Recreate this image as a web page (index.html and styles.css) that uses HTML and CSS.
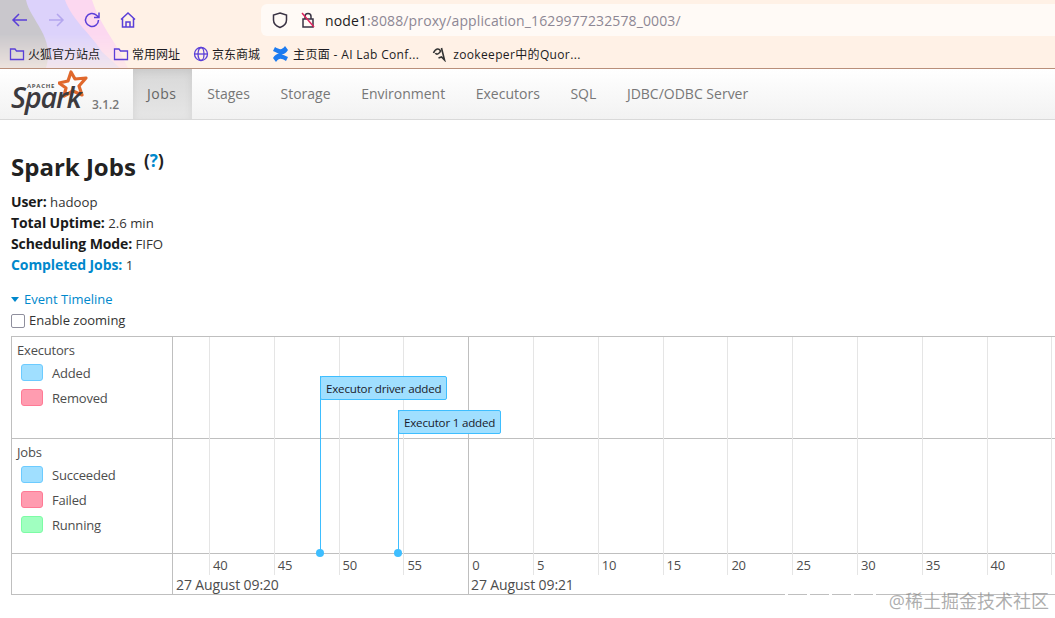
FILE: index.html
```html
<!DOCTYPE html>
<html lang="en">
<head>
    <meta charset="UTF-8">
    <title>Spark Jobs</title>
    <link rel="stylesheet" href="styles.css">
</head>
<body>
<!-- browser bar -->
<header class="chrome">
    <svg class="chrome-wash" width="300" height="68" viewBox="0 0 300 68">
        <path d="M0 0H92C100 25 115 40 128 68H0Z" fill="#fcd8f0"/>
        <path d="M0 0H65C72 20 92 35 102 52L120 68H0Z" fill="#dcd2fb"/>
        <path d="M0 0H26C30 20 56 38 46 68H0Z" fill="#c9c7cc"/>
    </svg>
    <div class="toolbar">
        <svg class="tool" width="20" height="20" viewBox="0 0 20 20"><path d="M17 10H3M9 4l-6 6 6 6"/></svg>
        <svg class="tool tool-off" width="20" height="20" viewBox="0 0 20 20"><path d="M3 10h14M11 4l6 6-6 6"/></svg>
        <svg class="tool" width="20" height="20" viewBox="0 0 20 20"><path d="M16.500 10a6.500 6.500 0 1 1-2-4.700L17 7.500M17 2.500v5h-5"/></svg>
        <svg class="tool" width="20" height="20" viewBox="0 0 20 20"><path d="M3 9.500 10 3l7 6.500M4.500 8.500V17h11V8.500M8 17v-5h4v5"/></svg>
        <div class="urlbar">
            <svg class="url-icon" width="18" height="18" viewBox="0 0 18 18"><path d="M9 2l6.500 2v5c0 3.500-2.500 6-6.500 7.500C5 15 2.500 12.500 2.500 9V4Z"/></svg>
            <svg class="url-icon" width="18" height="18" viewBox="0 0 18 18"><path d="M6 8V5.500a3 3 0 0 1 6 0V8M4 8h10v8H4Z"/><path class="strike" d="M3 2l12 14"/></svg>
            <span class="url"><b>node1</b>:8088/proxy/application_1629977232578_0003/</span>
        </div>
    </div>
    <div class="bookmarks">
        <span class="mark"><svg class="mark-icon" width="16" height="16" viewBox="0 0 16 16"><path d="M1.500 3h4.500l1.500 2h7v8.500h-13Z"/></svg>火狐官方站点</span>
        <span class="mark"><svg class="mark-icon" width="16" height="16" viewBox="0 0 16 16"><path d="M1.500 3h4.500l1.500 2h7v8.500h-13Z"/></svg>常用网址</span>
        <span class="mark"><svg class="mark-icon" width="16" height="16" viewBox="0 0 16 16"><circle cx="8" cy="8" r="6.500"/><ellipse cx="8" cy="8" rx="3" ry="6.500"/><path d="M1.500 8h13"/></svg>京东商城</span>
        <span class="mark mark-latin"><svg width="17" height="16" viewBox="0 0 17 16"><path d="M1 12c4-6 7-5 15-1l-2 4C9 12 7 12 4 16ZM16 4C12 10 9 9 1 5l2-4c5 3 7 3 10-1Z" fill="#1d7bf0"/></svg>主页面 - AI Lab Conf...</span>
        <span class="mark mark-latin"><svg width="18" height="16" viewBox="0 0 17 16"><path d="M2 7c2-5 6-5 7-2-1 3-4 4-5 2M10 2l3 12-3-3-3 1" fill="none" stroke="#333" stroke-width="1.600"/></svg>zookeeper中的Quor...</span>
    </div>
</header>

<!-- spark nav -->
<nav class="navbar">
    <div class="brand">
        <div class="logo">
            <svg class="logo-star" width="30" height="28" viewBox="0 0 30 28"><path d="M13 2l4 7 11-1-7 8 3 9-9-4-9 5 2-8-7-5 9-2Z" fill="none" stroke="#e0682c" stroke-width="3.200" stroke-linejoin="round"/></svg>
            <span class="logo-apache">APACHE</span>
            <span class="logo-spark">Spark</span>
        </div>
        <span class="version">3.1.2</span>
    </div>
    <ul class="tabs">
        <li class="tab-active">Jobs</li>
        <li>Stages</li>
        <li>Storage</li>
        <li>Environment</li>
        <li>Executors</li>
        <li>SQL</li>
        <li>JDBC/ODBC Server</li>
    </ul>
</nav>

<main>
    <h3>Spark Jobs <sup>(<a>?</a>)</sup></h3>
    <ul class="summary">
        <li><strong>User:</strong> hadoop</li>
        <li><strong>Total Uptime:</strong> 2.6 min</li>
        <li><strong>Scheduling Mode:</strong> FIFO</li>
        <li><a><strong>Completed Jobs:</strong></a> 1</li>
    </ul>
    <div class="expand"><span class="caret"></span>Event Timeline</div>
    <label class="zoom"><span class="checkbox"></span>Enable zooming</label>

    <div class="timeline">
        <div class="tl-labels">
            <div class="group group-exec">
                Executors
                <div class="legend"><span class="swatch sw-blue"></span>Added</div>
                <div class="legend"><span class="swatch sw-red"></span>Removed</div>
            </div>
            <div class="group group-jobs">
                Jobs
                <div class="legend"><span class="swatch sw-blue"></span>Succeeded</div>
                <div class="legend"><span class="swatch sw-red"></span>Failed</div>
                <div class="legend"><span class="swatch sw-green"></span>Running</div>
            </div>
        </div>
        <div class="tl-chart">
            <div class="ticks">
                <div class="tick">40</div>
                <div class="tick">45</div>
                <div class="tick">50</div>
                <div class="tick">55</div>
                <div class="tick tick-major">0</div>
                <div class="tick">5</div>
                <div class="tick">10</div>
                <div class="tick">15</div>
                <div class="tick">20</div>
                <div class="tick">25</div>
                <div class="tick">30</div>
                <div class="tick">35</div>
                <div class="tick">40</div>
                <div class="tick"></div>
            </div>
            <div class="lane lane-exec"></div>
            <div class="lane lane-jobs"></div>
            <div class="dates">
                <span class="date">27 August 09:20</span>
                <span class="date">27 August 09:21</span>
            </div>
            <div class="event event-driver">
                <div class="event-box">Executor driver added</div>
            </div>
            <div class="event event-one">
                <div class="event-box">Executor 1 added</div>
            </div>
        </div>
    </div>
</main>
<div class="watermark-fade"></div>
<div class="watermark">@稀土掘金技术社区</div>
</body>
</html>
```

FILE: styles.css
```css
* {
    margin: 0;
    padding: 0;
    box-sizing: border-box;
}

html, body {
    width: 1055px;
    height: 618px;
    overflow: hidden;
}

body {
    position: relative;
    background: #fff;
    color: #333;
    font-family: "Open Sans", "Noto Sans CJK SC", sans-serif;
    font-size: 13px;
}

ul {
    list-style: none;
}

/* browser bar */
.chrome {
    position: relative;
    height: 69px;
    background: #fff1e6;
    border-bottom: 1px solid #b98f7a;
}

.chrome-wash {
    position: absolute;
    top: 0;
    left: 0;
    mask-image: linear-gradient(#000 50%, rgba(0, 0, 0, 0.35));
}

.toolbar {
    position: relative;
    display: flex;
    align-items: center;
    height: 40px;
    padding: 0 0 0 10px;
    gap: 16px;
}

.tool {
    fill: none;
    stroke: #5a3fd8;
    stroke-width: 1.500;
}

.tool-off {
    stroke: #b3a5ee;
}

.urlbar {
    display: flex;
    align-items: center;
    flex: 1;
    height: 32px;
    margin-left: 107px;
    padding-left: 10px;
    gap: 10px;
    background: #fffaf6;
    border-radius: 6px 0 0 6px;
}

.url-icon {
    fill: none;
    stroke: #3a3344;
    stroke-width: 1.500;
}

.strike {
    stroke: #e0245e;
}

.url {
    margin-left: -2px;
    color: #8d8794;
    font-size: 14px;
    letter-spacing: 0.12px;
}

.url b {
    color: #1c1b22;
    font-weight: 400;
}

.bookmarks {
    position: relative;
    display: flex;
    align-items: center;
    height: 28px;
    padding-left: 9px;
    gap: 13px;
    color: #1c1b22;
    font-size: 12px;
}

.mark {
    display: flex;
    align-items: center;
    gap: 3px;
}

.mark-latin {
    gap: 4px;
    margin-left: -1px;
    letter-spacing: 0.35px;
}

.mark-icon {
    fill: none;
    stroke: #5a3fd8;
    stroke-width: 1.300;
}

/* spark nav */
.navbar {
    display: flex;
    height: 51px;
    background: linear-gradient(#fff, #f2f2f2);
    border-bottom: 1px solid #d9d9d9;
}

.brand {
    display: flex;
    width: 133px;
    padding-left: 11px;
}

.logo {
    position: relative;
    width: 81px;
}

.logo-star {
    position: absolute;
    top: 1px;
    left: 47px;
}

.logo-apache {
    position: absolute;
    top: 13px;
    left: 16px;
    color: #555;
    font-size: 6px;
    font-weight: 700;
    letter-spacing: 0.7px;
}

.logo-spark {
    position: absolute;
    top: 8px;
    left: 0;
    color: #3c3a3e;
    font-size: 29px;
    font-weight: 600;
    font-style: italic;
    letter-spacing: -1.300px;
}

.version {
    margin-top: 27px;
    color: #777;
    font-size: 12px;
    font-weight: 600;
}

.tabs {
    display: flex;
}

.tabs li {
    padding: 0 15.300px;
    color: #777;
    font-size: 14px;
    line-height: 50px;
}

.tabs .tab-active {
    width: 59px;
    padding: 0 0 0 14px;
    background: linear-gradient(#d8d8d8, #e6e6e6);
    box-shadow: inset 0 3px 8px rgba(0, 0, 0, 0.08);
    color: #666;
    letter-spacing: 0.5px;
}

/* page body */
main {
    padding: 33px 0 0 11px;
}

h3 {
    color: #222;
    font-size: 24px;
    font-weight: 700;
    line-height: 28px;
    margin-bottom: 10px;
}

h3 sup {
    position: relative;
    top: 0;
    margin-left: 2px;
    font-size: 17px;
    line-height: 0;
    vertical-align: super;
}

a {
    color: #0088cc;
}

.summary {
    margin-bottom: 14px;
}

.summary li {
    height: 21px;
    font-size: 13.200px;
    line-height: 21px;
}

strong {
    color: #1a1a1a;
    font-size: 14px;
    font-weight: 700;
    letter-spacing: -0.1px;
}

.summary a strong {
    color: #0088cc;
}

.expand {
    display: flex;
    align-items: center;
    color: #0088cc;
    font-size: 13px;
    line-height: 21px;
}

.caret {
    width: 0;
    height: 0;
    margin-right: 5px;
    border-top: 5px solid #0088cc;
    border-left: 4.500px solid transparent;
    border-right: 4.500px solid transparent;
}

.zoom {
    display: flex;
    align-items: center;
    gap: 4px;
    font-size: 13px;
    line-height: 21px;
    margin-bottom: 5px;
}

.checkbox {
    width: 14px;
    height: 14px;
    background: #fff;
    border: 1.500px solid #8f8f9d;
    border-radius: 2px;
}

/* timeline */
.timeline {
    display: flex;
    width: 1100px;
    height: 259px;
    border: 1px solid #bfbfbf;
    color: #4d4d4d;
    font-size: 13px;
    letter-spacing: -0.2px;
}

.tl-labels {
    flex: 0 0 161px;
    border-right: 1px solid #bfbfbf;
}

.group {
    padding: 3px 0 0 5px;
    line-height: 20px;
    border-bottom: 1px solid #bfbfbf;
}

.group-exec {
    height: 102px;
}

.group-jobs {
    height: 115px;
}

.legend {
    display: flex;
    align-items: center;
    height: 25px;
    padding-left: 4px;
    gap: 9px;
}

.swatch {
    width: 22px;
    height: 17px;
    border: 1px solid;
    border-radius: 3px;
}

.sw-blue {
    background: #a0dfff;
    border-color: #6ccbff;
}

.sw-red {
    background: #ff9cb0;
    border-color: #ff7a95;
}

.sw-green {
    background: #a0ffc0;
    border-color: #7dfca5;
}

.tl-chart {
    position: relative;
    flex: 1;
}

.lane {
    border-bottom: 1px solid #bfbfbf;
}

.lane-exec {
    height: 102px;
}

.lane-jobs {
    height: 115px;
}

.ticks {
    position: absolute;
    top: 0;
    left: 36px;
    display: flex;
}

.tick {
    flex: 0 0 64.800px;
    height: 238px;
    padding: 218px 0 0 3px;
    border-left: 1px solid #e5e5e5;
    line-height: 20px;
}

.tick-major {
    height: 257px;
    border-left-color: #bfbfbf;
}

.dates {
    display: flex;
    padding: 22px 0 0 3px;
    font-size: 14px;
    line-height: 18px;
    letter-spacing: -0.1px;
}

.date {
    flex: 0 0 295px;
}

.event {
    position: absolute;
    border-left: 1px solid #3ebeff;
}

.event::after {
    content: "";
    position: absolute;
    bottom: -4px;
    left: -5px;
    width: 8px;
    height: 8px;
    background: #3ebeff;
    border-radius: 50%;
}

.event-driver {
    top: 39px;
    left: 147px;
    height: 177px;
}

.event-one {
    top: 73px;
    left: 225px;
    height: 143px;
}

.event-box {
    margin-left: -1px;
    height: 24px;
    padding: 0 5px;
    background: #a0dfff;
    border: 1px solid #3ebeff;
    border-radius: 2px;
    color: #1a1a2a;
    font-size: 11.600px;
    line-height: 23px;
    letter-spacing: -0.2px;
    white-space: nowrap;
}

/* the watermark's pale band breaks up the timeline's bottom line */
.watermark-fade {
    position: absolute;
    top: 594px;
    left: 785px;
    width: 105px;
    height: 1px;
    background: repeating-linear-gradient(90deg, #fff 0 3px, transparent 3px 22px);
}

.watermark {
    position: absolute;
    top: 590px;
    right: 6px;
    color: rgba(120, 120, 120, 0.6);
    font-size: 18px;
    line-height: 22px;
}
```
